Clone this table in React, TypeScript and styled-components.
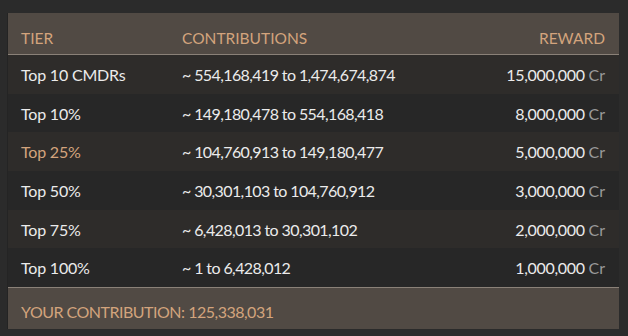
import React from "react";
import styled, { createGlobalStyle } from "styled-components";

const GlobalStyle = createGlobalStyle`
  html, body {
    margin: 0;
    background: #2b2b2b;
  }
  body {
    font-family: "Lato", "Open Sans", sans-serif;
  }
`;

const Page = styled.div`
  padding: 13px 9px 6px 7px;
`;

const Board = styled.div`
  background: #282828;
  border-left: 1px solid #242424;
`;

const Row = styled.div<{ $shade?: boolean }>`
  display: grid;
  grid-template-columns: 161px 1fr auto;
  align-items: center;
  height: 38.7px;
  padding: 0 14px 0 13px;
  background: ${(p) => (p.$shade ? "#2e2c2a" : "#272727")};
  color: #ebebeb;
  font-size: 16px;
`;

const HeaderRow = styled(Row)`
  height: 42px;
  box-sizing: border-box;
  padding-top: 8px;
  background: #514a44;
  border-bottom: 1px solid #8a8178;
  color: #d3a47d;
  font-size: 15.5px;
  letter-spacing: 0.1px;
`;

const Cell = styled.div<{ $right?: boolean; $accent?: boolean; $tight?: number }>`
  text-align: ${(p) => (p.$right ? "right" : "left")};
  color: ${(p) => (p.$accent ? "#d3a47d" : "inherit")};
  letter-spacing: ${(p) => (p.$tight ? `-${p.$tight}px` : "normal")};
  white-space: nowrap;
`;

const Unit = styled.span`
  color: #9a9a9a;
  letter-spacing: normal;
`;

const Footer = styled.div`
  height: 42px;
  box-sizing: border-box;
  display: flex;
  align-items: center;
  padding: 5px 13px 0;
  background: #514a44;
  border-top: 1px solid #8a8178;
  color: #d3a47d;
  font-size: 16px;
  letter-spacing: -0.5px;
`;

const tiers = [
  { tier: "Top 10 CMDRs", range: "~ 554,168,419 to 1,474,674,874", reward: "15,000,000" },
  { tier: "Top 10%", range: "~ 149,180,478 to 554,168,418", reward: "8,000,000" },
  { tier: "Top 25%", range: "~ 104,760,913 to 149,180,477", reward: "5,000,000", mine: true },
  { tier: "Top 50%", range: "~ 30,301,103 to 104,760,912", reward: "3,000,000" },
  { tier: "Top 75%", range: "~ 6,428,013 to 30,301,102", reward: "2,000,000" },
  { tier: "Top 100%", range: "~ 1 to 6,428,012", reward: "1,000,000" },
];

const App = () => {
  return (
    <Page>
      <GlobalStyle />
      <Board>
        <HeaderRow>
          <Cell>TIER</Cell>
          <Cell>CONTRIBUTIONS</Cell>
          <Cell $right>REWARD</Cell>
        </HeaderRow>
        {tiers.map((t, index) => (
          <Row key={t.tier} $shade={index % 2 === 0}>
            <Cell $accent={t.mine} $tight={0.2}>
              {t.tier}
            </Cell>
            <Cell $tight={0.6}>{t.range}</Cell>
            <Cell $right $tight={0.3}>
              {t.reward} <Unit>Cr</Unit>
            </Cell>
          </Row>
        ))}
        <Footer>YOUR CONTRIBUTION: 125,338,031</Footer>
      </Board>
    </Page>
  );
};

export default App;
